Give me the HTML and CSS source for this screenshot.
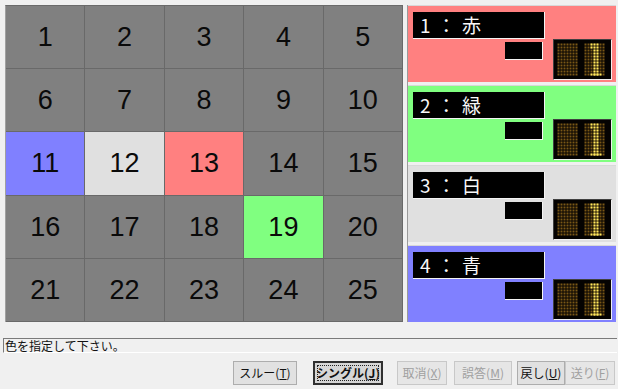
FILE: index.html
```
<!DOCTYPE html>
<html lang="ja">
<head>
  <meta charset="UTF-8" />
  <title>色指定</title>
  <link rel="stylesheet" href="styles.css">
</head>
<body>

  <div class="main">
    <!-- 番号パネル -->
    <div class="board">
      <div class="cell">1</div><div class="cell">2</div><div class="cell">3</div><div class="cell">4</div><div class="cell">5</div>
      <div class="cell">6</div><div class="cell">7</div><div class="cell">8</div><div class="cell">9</div><div class="cell">10</div>
      <div class="cell blue">11</div><div class="cell white">12</div><div class="cell red">13</div><div class="cell">14</div><div class="cell">15</div>
      <div class="cell">16</div><div class="cell">17</div><div class="cell">18</div><div class="cell green">19</div><div class="cell">20</div>
      <div class="cell">21</div><div class="cell">22</div><div class="cell">23</div><div class="cell">24</div><div class="cell">25</div>
    </div>

    <!-- プレイヤー -->
    <div class="players">
      <div class="player red">
        <div class="name">1 ： 赤</div>
        <div class="row">
          <div class="score"></div>
          <svg class="led" width="57" height="39" viewBox="0 0 57 39">
            <defs>
              <pattern id="dim" width="3" height="3" patternUnits="userSpaceOnUse"><rect x="0.5" y="0.5" width="2" height="2" fill="#7a5716"/></pattern>
              <pattern id="lit" width="3" height="3" patternUnits="userSpaceOnUse"><rect x="0.5" y="0.5" width="2" height="2" fill="#ffe85e"/></pattern>
            </defs>
            <rect x="3" y="3" width="21" height="33" fill="url(#dim)"/>
            <rect x="30" y="3" width="21" height="33" fill="url(#dim)"/>
            <rect x="39" y="3" width="6" height="33" fill="url(#lit)"/>
            <rect x="36" y="3" width="3" height="6" fill="url(#lit)"/>
            <rect x="36" y="33" width="12" height="3" fill="url(#lit)"/>
          </svg>
        </div>
      </div>
      <div class="player green">
        <div class="name">2 ： 緑</div>
        <div class="row">
          <div class="score"></div>
          <svg class="led" width="57" height="39" viewBox="0 0 57 39">
            <rect x="3" y="3" width="21" height="33" fill="url(#dim)"/>
            <rect x="30" y="3" width="21" height="33" fill="url(#dim)"/>
            <rect x="39" y="3" width="6" height="33" fill="url(#lit)"/>
            <rect x="36" y="3" width="3" height="6" fill="url(#lit)"/>
            <rect x="36" y="33" width="12" height="3" fill="url(#lit)"/>
          </svg>
        </div>
      </div>
      <div class="player white">
        <div class="name">3 ： 白</div>
        <div class="row">
          <div class="score"></div>
          <svg class="led" width="57" height="39" viewBox="0 0 57 39">
            <rect x="3" y="3" width="21" height="33" fill="url(#dim)"/>
            <rect x="30" y="3" width="21" height="33" fill="url(#dim)"/>
            <rect x="39" y="3" width="6" height="33" fill="url(#lit)"/>
            <rect x="36" y="3" width="3" height="6" fill="url(#lit)"/>
            <rect x="36" y="33" width="12" height="3" fill="url(#lit)"/>
          </svg>
        </div>
      </div>
      <div class="player blue">
        <div class="name">4 ： 青</div>
        <div class="row">
          <div class="score"></div>
          <svg class="led" width="57" height="39" viewBox="0 0 57 39">
            <rect x="3" y="3" width="21" height="33" fill="url(#dim)"/>
            <rect x="30" y="3" width="21" height="33" fill="url(#dim)"/>
            <rect x="39" y="3" width="6" height="33" fill="url(#lit)"/>
            <rect x="36" y="3" width="3" height="6" fill="url(#lit)"/>
            <rect x="36" y="33" width="12" height="3" fill="url(#lit)"/>
          </svg>
        </div>
      </div>
    </div>
  </div>

  <!-- ステータス -->
  <div class="status">色を指定して下さい。</div>

  <div class="buttons">
    <button class="b-thru">スルー(<u>T</u>)</button>
    <button class="b-single">シングル(<u>J</u>)</button>
    <button class="b-cancel" disabled>取消(<u>X</u>)</button>
    <button class="b-wrong" disabled>誤答(<u>M</u>)</button>
    <button class="b-back">戻し(<u>U</u>)</button>
    <button class="b-next" disabled>送り(<u>F</u>)</button>
  </div>

</body>
</html>
```

FILE: styles.css
```
body {
  margin: 0;
  background: #f0f0f0;
  font-family: 'Noto Sans CJK JP', sans-serif;
  width: 618px;
  height: 389px;
  overflow: hidden;
}
.main {
  display: flex;
  padding: 5px 0 0 5px;
  height: 317px;
}
.board {
  width: 398px;
  height: 317px;
  display: grid;
  grid-template-columns: repeat(5, 1fr);
  grid-template-rows: repeat(5, 1fr);
  border-left: 1px solid #a0a0a0;
  border-top: 1px solid #6a6a6a;
  box-sizing: border-box;
}
.cell {
  background: #808080;
  border-right: 1px solid #696969;
  border-bottom: 1px solid #696969;
  display: flex;
  align-items: center;
  justify-content: center;
  font-family: 'Liberation Sans', sans-serif;
  font-size: 27px;
  color: #0a0a0a;
  padding-top: 1px;
}
.cell.blue { background: #8080ff; }
.cell.white { background: #e0e0e0; }
.cell.red { background: #ff8080; }
.cell.green { background: #80ff80; }

.players {
  margin-left: 4px;
  width: 208px;
  border-left: 1px solid #9a9a9a;
  display: flex;
  flex-direction: column;
  gap: 3px;
}
.player {
  height: 77px;
  box-sizing: border-box;
  padding: 6px 0 0 5px;
  border-top: 1px solid #d8d8d8;
}
.player.red { background: #ff8080; }
.player.green { background: #80ff80; }
.player.white { background: #e0e0e0; }
.player.blue { background: #8080ff; }

.name {
  width: 132px;
  height: 27px;
  box-sizing: border-box;
  background: #000;
  border-right: 1px solid #f4f4f4;
  border-bottom: 1px solid #f4f4f4;
  color: #f8f8f8;
  font-size: 19px;
  line-height: 26px;
  padding-left: 7px;
  letter-spacing: 1px;
  white-space: pre;
}
.row {
  display: flex;
  align-items: flex-start;
}
.score {
  width: 38px;
  height: 18px;
  box-sizing: border-box;
  background: #000;
  border-right: 1px solid #f4f4f4;
  border-bottom: 1px solid #f4f4f4;
  margin-left: 92px;
  margin-top: 3px;
}
.led {
  display: block;
  margin-left: 10px;
  background: #050302;
  border-right: 1px solid #f0f0f0;
  border-bottom: 1px solid #f0f0f0;
  border-left: 1px solid #404040;
  border-top: 1px solid #404040;
}

.status {
  margin: 16px 1px 0 3px;
  height: 15px;
  box-sizing: border-box;
  border-top: 1px solid #7a7a7a;
  border-left: 1px solid #7a7a7a;
  border-bottom: 1px solid #fff;
  font-size: 12px;
  line-height: 14px;
  color: #111;
  padding-left: 1px;
}

.buttons {
  display: flex;
  justify-content: flex-end;
  padding: 8px 3px 0 0;
}
button {
  height: 24px;
  box-sizing: border-box;
  font-family: 'Noto Sans CJK JP', sans-serif;
  font-size: 12px;
  color: #111;
  background: #e1e1e1;
  border: 1px solid #adadad;
  padding: 0;
  line-height: 20px;
}
button:disabled {
  color: #a0a0a0;
  background: #e6e6e6;
  border-color: #c8c8c8;
}
.b-thru { width: 64px; }
.b-single {
  width: 70px;
  margin-left: 16px;
  border: 2px solid #303030;
  outline: 1px dotted #222;
  outline-offset: -5px;
  background: #d6d6d6;
  font-weight: bold;
}
.b-cancel { width: 50px; margin-left: 14px; }
.b-wrong { width: 58px; margin-left: 7px; }
.b-back { width: 48px; margin-left: 5px; }
.b-next { width: 50px; }
```
